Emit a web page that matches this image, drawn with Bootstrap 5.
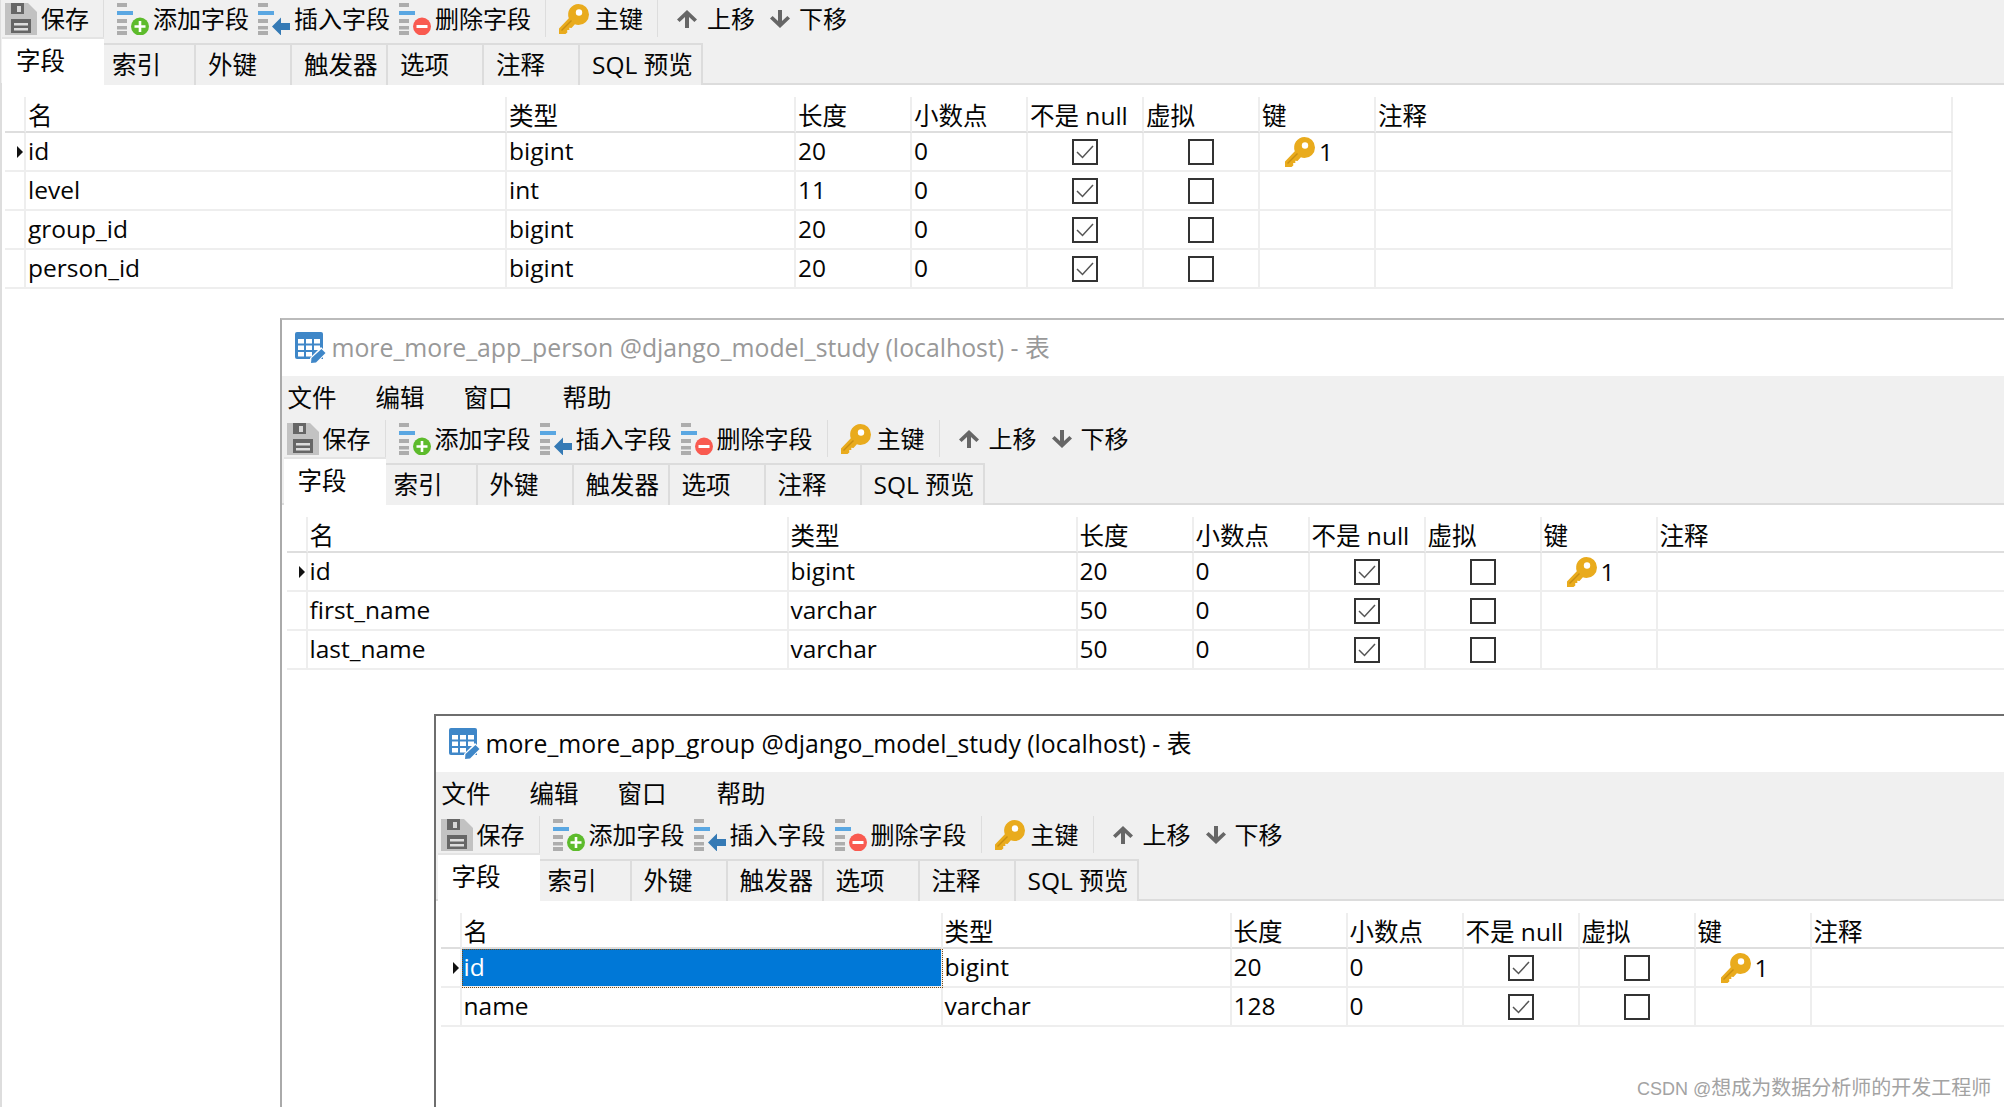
<!DOCTYPE html>
<html lang="zh-CN">
<head>
<meta charset="utf-8">
<title>Navicat table designer</title>
<link href="https://cdn.jsdelivr.net/npm/bootstrap@5.3.0/dist/css/bootstrap.min.css" rel="stylesheet">
<style>
html,body{height:100%;overflow:hidden;background:#fff}
body{position:relative;font-family:"Open Sans","Noto Sans CJK SC",sans-serif;font-size:24.500px;color:#050505;line-height:1.2}
.win{position:absolute;background:#fff;height:1400px;border-left:2px solid #ddd}
.win1{left:0;top:0;width:2004px}
.win2{left:280px;top:318px;width:2100px;border-top:2px solid #bbb;border-left-color:#aaa;padding-left:1.500px}
.win3{left:434px;top:714px;width:2100px;border-top:2px solid #6e6e6e;border-left-color:#6e6e6e;padding-left:1.500px}
.tbar-title{height:56px;padding-left:11px;gap:5px;font-size:24.800px}
.win2 .tbar-title{color:#999}
.menu-row{height:44px;background:#f0f0f0;margin-left:-1.500px;padding-left:1.500px}
.menu-row span{position:relative;width:88px;padding-left:4px}
.menu-row span:nth-child(3){width:99px}
.tool-row{height:39px;background:#f0f0f0;margin-left:-1.500px;padding-left:1.500px;font-size:24px}
.tool{height:37px;flex:none}
.tool svg{flex:none}
.tool span{padding-top:2px}
.t-save{width:102px;padding-left:3px;border-right:1px solid #ddd}
.t-save span{margin-left:4px}
.t-f{width:141px;margin-left:13px}
.t-f:nth-child(4){width:147px;border-right:1px solid #ddd}
.t-f span{margin-left:0}
.t-key{width:112px;padding-left:13px;border-right:1px solid #ddd}
.t-key span{margin-left:6px}
.t-up{margin-left:19px;width:93px}
.t-up span{margin-left:10px}
.t-down span{margin-left:9px}
.nav.strip{height:46px;background:#f0f0f0;border-bottom:2px solid #dcdcdc;flex-wrap:nowrap;align-items:flex-end;margin-left:-1.500px;padding-left:1.500px}
.strip .nav-link{color:#050505;height:42px;margin:0 0 -2px;width:96px;padding:3px 0 0 12px;background:#f0f0f0;border:0;border-top:2px solid #dcdcdc;border-right:2px solid #dcdcdc;border-radius:0;white-space:nowrap;line-height:34px}
.strip .nav-item:nth-child(2) .nav-link{width:92px;padding-left:8px}
.strip .nav-item:last-child .nav-link{width:123px}
.strip .nav-link.active{height:48px;width:102px;padding:5px 0 0 14px;background:#fff;color:#050505;border-top:2px solid #e4e4e4;border-right:0}
.grid.table{table-layout:fixed;width:1948px;margin:12px 0 0 3px;border-collapse:separate;border-spacing:0;--bs-table-bg:transparent;color:#050505}
.grid.table>*>*>*{padding:0 0 2px 2px;border-bottom:2px solid #eee;border-right:2px solid #eee;height:39px;vertical-align:middle;font-weight:400;white-space:nowrap;color:#050505}
.grid.table>thead>tr>th{height:36px;border-bottom-color:#dedede;padding:4px 0 0 2px}
.grid.table>tbody>tr>.mk{padding:0;position:relative}
.grid .mk svg{position:absolute;left:12px;top:13px}
.grid.table>tbody>tr>.ctr{padding:0;text-align:center}
.grid .ctr svg{display:block;margin:auto}
.grid.table>tbody>tr>.kc{padding:0 0 0 25px}
.grid .kc>div{gap:4px}
.grid.table>tbody>tr>td.sel{background:#0078d7;color:#fff;outline:1px dotted #7a4a10;outline-offset:-1px}
.water{position:absolute;left:1637px;top:1075px;font-size:20px;line-height:26px;color:#a3a3a3;font-family:"Liberation Sans","Noto Sans CJK SC",sans-serif}
.water-l{font-size:18px}
</style>
</head>
<body>
<svg width="0" height="0" class="position-absolute">
<defs>
<symbol id="i-save" viewBox="0 0 32 32"><path d="M0 0h23l9 9v23H0z" fill="#c2c2c2"/><path d="M6 0h13v11H6z" fill="#666"/><path d="M12 3h4v6h-4z" fill="#d8d8d8"/><path d="M6 16h20v14H6z" fill="#666"/><path d="M9 20h14v2.500H9zM9 25h14v2.500H9z" fill="#ddd"/></symbol>
<symbol id="i-bars" viewBox="0 0 16 32"><path d="M0 0h10v4H0zM0 16h10v4H0zM0 23h10v3.500H0zM0 28h10v4H0z" fill="#adadad"/><path d="M0 8h16v4H0z" fill="#5aa7e2"/></symbol>
<symbol id="i-add" viewBox="0 0 36 32"><use href="#i-bars" width="16" height="32"/><circle cx="23" cy="23.500" r="9" fill="#5dbb2c"/><path d="M21.700 18h2.600v4.200h4.200v2.600h-4.200V29h-2.600v-4.200h-4.200v-2.600h4.200z" fill="#fff"/></symbol>
<symbol id="i-ins" viewBox="0 0 36 32"><use href="#i-bars" width="16" height="32"/><path d="M14 23.500 23 14.500v5.500h9v7h-9v5.500z" fill="#357ab5"/></symbol>
<symbol id="i-del" viewBox="0 0 36 32"><use href="#i-bars" width="16" height="32"/><circle cx="23" cy="23.500" r="9" fill="#f95a50"/><path d="M17.500 22h11v3h-11z" fill="#fff"/></symbol>
<symbol id="i-key" viewBox="0 0 30 30"><path fill="#e9ab1d" d="M19.500 0a10.500 10.500 0 0 1 0 21c-1.300 0-2.500-.2-3.600-.7L12.500 24l-2.300-.2.200 2.300-2.200 0 .1 2.300L6.500 30H0v-5.500L9.800 14.200A10.500 10.500 0 0 1 19.500 0z"/><circle cx="20" cy="8.500" r="3.200" fill="#fff"/><path d="M2 26 12 16l1 1L3 27z" fill="#c98f12"/></symbol>
<symbol id="i-up" viewBox="0 0 20 18"><path d="M10 0 20 9.500l-2.600 2.400L12 7v11H8V7L2.600 11.900 0 9.500z" fill="#666"/></symbol>
<symbol id="i-down" viewBox="0 0 20 18"><path d="M10 18 20 8.500 17.400 6.100 12 11V0H8v11L2.600 6.100 0 8.500z" fill="#666"/></symbol>
<symbol id="i-on" viewBox="0 0 26 26"><rect x="1" y="1" width="24" height="24" fill="#fff" stroke="#333" stroke-width="2"/><path d="M5 13l5.500 5.500L21 7" fill="none" stroke="#555" stroke-width="1.500"/></symbol>
<symbol id="i-off" viewBox="0 0 26 26"><rect x="1" y="1" width="24" height="24" fill="#fff" stroke="#333" stroke-width="2"/></symbol>
<symbol id="i-mk" viewBox="0 0 6 12"><path d="M0 0l6 6-6 6z" fill="#111"/></symbol>
<symbol id="i-tbl" viewBox="0 0 32 32"><path d="M2 0h24a2 2 0 0 1 2 2v25H2a2 2 0 0 1-2-2V2a2 2 0 0 1 2-2z" fill="#3f87c8"/><path d="M3 7h6v4.500H3zM11 7h6v4.500h-6zM19 7h6v4.500h-6zM3 13.500h6V18H3zM11 13.500h6V18h-6zM19 13.500h6V18h-6zM3 20h6v4.500H3zM11 20h6v4.500h-6z" fill="#fff"/><path d="M26 15l6 6-11 11h-6v-6z" fill="#fff"/><path d="M26.500 17l4 4-9.500 9.500-5 .5.500-5z" fill="#3f87c8"/></symbol>
</defs>
</svg>

<section class="win win1">
  <div class="tool-row d-flex">
    <div class="tool t-save d-flex align-items-center"><svg width="32" height="32"><use href="#i-save"/></svg><span>保存</span></div>
    <div class="tool t-f d-flex align-items-center"><svg width="36" height="32"><use href="#i-add"/></svg><span>添加字段</span></div>
    <div class="tool t-f d-flex align-items-center ms-0"><svg width="36" height="32"><use href="#i-ins"/></svg><span>插入字段</span></div>
    <div class="tool t-f d-flex align-items-center ms-0"><svg width="36" height="32"><use href="#i-del"/></svg><span>删除字段</span></div>
    <div class="tool t-key d-flex align-items-center"><svg width="30" height="30"><use href="#i-key"/></svg><span>主键</span></div>
    <div class="tool t-up d-flex align-items-center"><svg width="20" height="18"><use href="#i-up"/></svg><span>上移</span></div>
    <div class="tool t-down d-flex align-items-center"><svg width="20" height="18"><use href="#i-down"/></svg><span>下移</span></div>
  </div>
  <ul class="nav strip">
    <li class="nav-item"><a class="nav-link active" href="#">字段</a></li>
    <li class="nav-item"><a class="nav-link" href="#">索引</a></li>
    <li class="nav-item"><a class="nav-link" href="#">外键</a></li>
    <li class="nav-item"><a class="nav-link" href="#">触发器</a></li>
    <li class="nav-item"><a class="nav-link" href="#">选项</a></li>
    <li class="nav-item"><a class="nav-link" href="#">注释</a></li>
    <li class="nav-item"><a class="nav-link" href="#">SQL 预览</a></li>
  </ul>
  <table class="table grid">
    <colgroup><col style="width:21px"><col style="width:481px"><col style="width:289px"><col style="width:116px"><col style="width:116px"><col style="width:116px"><col style="width:116px"><col style="width:116px"><col></colgroup>
    <thead><tr><th></th><th>名</th><th>类型</th><th>长度</th><th>小数点</th><th>不是 null</th><th>虚拟</th><th>键</th><th>注释</th></tr></thead>
    <tbody>
      <tr><td class="mk"><svg width="6" height="12"><use href="#i-mk"/></svg></td><td>id</td><td>bigint</td><td>20</td><td>0</td><td class="ctr"><svg width="26" height="26"><use href="#i-on"/></svg></td><td class="ctr"><svg width="26" height="26"><use href="#i-off"/></svg></td><td class="kc"><div class="d-flex align-items-center"><svg width="30" height="30"><use href="#i-key"/></svg><span>1</span></div></td><td></td></tr>
      <tr><td class="mk"></td><td>level</td><td>int</td><td>11</td><td>0</td><td class="ctr"><svg width="26" height="26"><use href="#i-on"/></svg></td><td class="ctr"><svg width="26" height="26"><use href="#i-off"/></svg></td><td></td><td></td></tr>
      <tr><td class="mk"></td><td>group_id</td><td>bigint</td><td>20</td><td>0</td><td class="ctr"><svg width="26" height="26"><use href="#i-on"/></svg></td><td class="ctr"><svg width="26" height="26"><use href="#i-off"/></svg></td><td></td><td></td></tr>
      <tr><td class="mk"></td><td>person_id</td><td>bigint</td><td>20</td><td>0</td><td class="ctr"><svg width="26" height="26"><use href="#i-on"/></svg></td><td class="ctr"><svg width="26" height="26"><use href="#i-off"/></svg></td><td></td><td></td></tr>
    </tbody>
  </table>
</section>

<section class="win win2">
  <div class="tbar-title d-flex align-items-center"><svg width="32" height="32"><use href="#i-tbl"/></svg><span>more_more_app_person @django_model_study (localhost) - 表</span></div>
  <div class="menu-row d-flex align-items-center"><span>文件</span><span>编辑</span><span>窗口</span><span>帮助</span></div>
  <div class="tool-row d-flex">
    <div class="tool t-save d-flex align-items-center"><svg width="32" height="32"><use href="#i-save"/></svg><span>保存</span></div>
    <div class="tool t-f d-flex align-items-center"><svg width="36" height="32"><use href="#i-add"/></svg><span>添加字段</span></div>
    <div class="tool t-f d-flex align-items-center ms-0"><svg width="36" height="32"><use href="#i-ins"/></svg><span>插入字段</span></div>
    <div class="tool t-f d-flex align-items-center ms-0"><svg width="36" height="32"><use href="#i-del"/></svg><span>删除字段</span></div>
    <div class="tool t-key d-flex align-items-center"><svg width="30" height="30"><use href="#i-key"/></svg><span>主键</span></div>
    <div class="tool t-up d-flex align-items-center"><svg width="20" height="18"><use href="#i-up"/></svg><span>上移</span></div>
    <div class="tool t-down d-flex align-items-center"><svg width="20" height="18"><use href="#i-down"/></svg><span>下移</span></div>
  </div>
  <ul class="nav strip">
    <li class="nav-item"><a class="nav-link active" href="#">字段</a></li>
    <li class="nav-item"><a class="nav-link" href="#">索引</a></li>
    <li class="nav-item"><a class="nav-link" href="#">外键</a></li>
    <li class="nav-item"><a class="nav-link" href="#">触发器</a></li>
    <li class="nav-item"><a class="nav-link" href="#">选项</a></li>
    <li class="nav-item"><a class="nav-link" href="#">注释</a></li>
    <li class="nav-item"><a class="nav-link" href="#">SQL 预览</a></li>
  </ul>
  <table class="table grid">
    <colgroup><col style="width:21px"><col style="width:481px"><col style="width:289px"><col style="width:116px"><col style="width:116px"><col style="width:116px"><col style="width:116px"><col style="width:116px"><col></colgroup>
    <thead><tr><th></th><th>名</th><th>类型</th><th>长度</th><th>小数点</th><th>不是 null</th><th>虚拟</th><th>键</th><th>注释</th></tr></thead>
    <tbody>
      <tr><td class="mk"><svg width="6" height="12"><use href="#i-mk"/></svg></td><td>id</td><td>bigint</td><td>20</td><td>0</td><td class="ctr"><svg width="26" height="26"><use href="#i-on"/></svg></td><td class="ctr"><svg width="26" height="26"><use href="#i-off"/></svg></td><td class="kc"><div class="d-flex align-items-center"><svg width="30" height="30"><use href="#i-key"/></svg><span>1</span></div></td><td></td></tr>
      <tr><td class="mk"></td><td>first_name</td><td>varchar</td><td>50</td><td>0</td><td class="ctr"><svg width="26" height="26"><use href="#i-on"/></svg></td><td class="ctr"><svg width="26" height="26"><use href="#i-off"/></svg></td><td></td><td></td></tr>
      <tr><td class="mk"></td><td>last_name</td><td>varchar</td><td>50</td><td>0</td><td class="ctr"><svg width="26" height="26"><use href="#i-on"/></svg></td><td class="ctr"><svg width="26" height="26"><use href="#i-off"/></svg></td><td></td><td></td></tr>
    </tbody>
  </table>
</section>

<section class="win win3">
  <div class="tbar-title d-flex align-items-center"><svg width="32" height="32"><use href="#i-tbl"/></svg><span>more_more_app_group @django_model_study (localhost) - 表</span></div>
  <div class="menu-row d-flex align-items-center"><span>文件</span><span>编辑</span><span>窗口</span><span>帮助</span></div>
  <div class="tool-row d-flex">
    <div class="tool t-save d-flex align-items-center"><svg width="32" height="32"><use href="#i-save"/></svg><span>保存</span></div>
    <div class="tool t-f d-flex align-items-center"><svg width="36" height="32"><use href="#i-add"/></svg><span>添加字段</span></div>
    <div class="tool t-f d-flex align-items-center ms-0"><svg width="36" height="32"><use href="#i-ins"/></svg><span>插入字段</span></div>
    <div class="tool t-f d-flex align-items-center ms-0"><svg width="36" height="32"><use href="#i-del"/></svg><span>删除字段</span></div>
    <div class="tool t-key d-flex align-items-center"><svg width="30" height="30"><use href="#i-key"/></svg><span>主键</span></div>
    <div class="tool t-up d-flex align-items-center"><svg width="20" height="18"><use href="#i-up"/></svg><span>上移</span></div>
    <div class="tool t-down d-flex align-items-center"><svg width="20" height="18"><use href="#i-down"/></svg><span>下移</span></div>
  </div>
  <ul class="nav strip">
    <li class="nav-item"><a class="nav-link active" href="#">字段</a></li>
    <li class="nav-item"><a class="nav-link" href="#">索引</a></li>
    <li class="nav-item"><a class="nav-link" href="#">外键</a></li>
    <li class="nav-item"><a class="nav-link" href="#">触发器</a></li>
    <li class="nav-item"><a class="nav-link" href="#">选项</a></li>
    <li class="nav-item"><a class="nav-link" href="#">注释</a></li>
    <li class="nav-item"><a class="nav-link" href="#">SQL 预览</a></li>
  </ul>
  <table class="table grid">
    <colgroup><col style="width:21px"><col style="width:481px"><col style="width:289px"><col style="width:116px"><col style="width:116px"><col style="width:116px"><col style="width:116px"><col style="width:116px"><col></colgroup>
    <thead><tr><th></th><th>名</th><th>类型</th><th>长度</th><th>小数点</th><th>不是 null</th><th>虚拟</th><th>键</th><th>注释</th></tr></thead>
    <tbody>
      <tr><td class="mk"><svg width="6" height="12"><use href="#i-mk"/></svg></td><td class="sel">id</td><td>bigint</td><td>20</td><td>0</td><td class="ctr"><svg width="26" height="26"><use href="#i-on"/></svg></td><td class="ctr"><svg width="26" height="26"><use href="#i-off"/></svg></td><td class="kc"><div class="d-flex align-items-center"><svg width="30" height="30"><use href="#i-key"/></svg><span>1</span></div></td><td></td></tr>
      <tr><td class="mk"></td><td>name</td><td>varchar</td><td>128</td><td>0</td><td class="ctr"><svg width="26" height="26"><use href="#i-on"/></svg></td><td class="ctr"><svg width="26" height="26"><use href="#i-off"/></svg></td><td></td><td></td></tr>
    </tbody>
  </table>
</section>

<div class="water"><span class="water-l">CSDN @</span>想成为数据分析师的开发工程师</div>
<script src="https://cdn.jsdelivr.net/npm/bootstrap@5.3.0/dist/js/bootstrap.bundle.min.js"></script>
</body>
</html>
